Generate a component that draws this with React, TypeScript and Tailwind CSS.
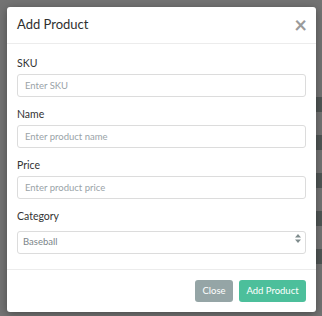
import { useState } from "react";

const font = { fontFamily: "Lato, 'Open Sans', sans-serif" };

function Field({ label, placeholder }: { label: string; placeholder: string }) {
  return (
    <div className="flex flex-col">
      <label className="text-[10.5px] leading-[14px] text-[#333] mb-1">{label}</label>
      <input
        placeholder={placeholder}
        className="h-[23px] w-full rounded-[3px] border border-[#dcdcdc] bg-white px-[7px] text-[9.5px] text-[#555] placeholder:text-[#9aa3a8] outline-none"
        style={font}
      />
    </div>
  );
}

export default function App() {
  const [category, setCategory] = useState("Baseball");

  return (
    <div className="relative h-[316px] w-[322px] overflow-hidden bg-[#737373]" style={font}>
      {/* page behind the overlay */}
      <div className="flex h-full justify-end">
        <div className="flex w-[6px] flex-col gap-[23px] pt-[97px]">
          {[0, 1, 2, 3, 4].map((i) => (
            <div key={i} className="h-[15px] bg-[#4f5554]" />
          ))}
        </div>
      </div>

      {/* modal */}
      <div className="absolute left-[7px] top-[7px] flex h-[305px] w-[309px] flex-col rounded-[3px] bg-white shadow-[0_2px_8px_rgba(0,0,0,0.35)]">
        <div className="flex h-[37px] items-center justify-between border-b border-[#ececec] pl-[10px] pr-[9px]">
          <h2 className="text-[13px] text-[#2f2f2f]">Add Product</h2>
          <button className="text-[22px] font-bold leading-none text-[#9a9a9a]">×</button>
        </div>

        <div className="flex flex-1 flex-col gap-[10px] px-[10px] pt-[12px]">
          <Field label="SKU" placeholder="Enter SKU" />
          <Field label="Name" placeholder="Enter product name" />
          <Field label="Price" placeholder="Enter product price" />
          <div className="flex flex-col">
            <label className="mb-1 text-[10.5px] leading-[14px] text-[#333]">Category</label>
            <div className="relative">
              <select
                value={category}
                onChange={(e) => setCategory(e.target.value)}
                className="h-[23px] w-full appearance-none rounded-[3px] border border-[#dcdcdc] bg-white px-[5px] text-[9.5px] text-[#7b8589] outline-none"
                style={font}
              >
                <option>Baseball</option>
                <option>Basketball</option>
                <option>Football</option>
              </select>
              <svg className="pointer-events-none absolute right-[5px] top-[7px]" width="6" height="9" viewBox="0 0 6 9">
                <path d="M3 0 L6 3.5 L0 3.5 Z M3 9 L6 5.5 L0 5.5 Z" fill="#7f8c8d" />
              </svg>
            </div>
          </div>
        </div>

        <div className="flex h-[43px] items-start justify-end gap-[6px] border-t border-[#ececec] px-[10px] pt-[10px]">
          <button className="h-[22px] w-[38px] rounded-[3px] bg-[#95a5a6] text-[9.5px] text-white">Close</button>
          <button className="h-[22px] w-[67px] rounded-[3px] bg-[#4cbf9b] text-[9.5px] text-white">Add Product</button>
        </div>
      </div>
    </div>
  );
}
